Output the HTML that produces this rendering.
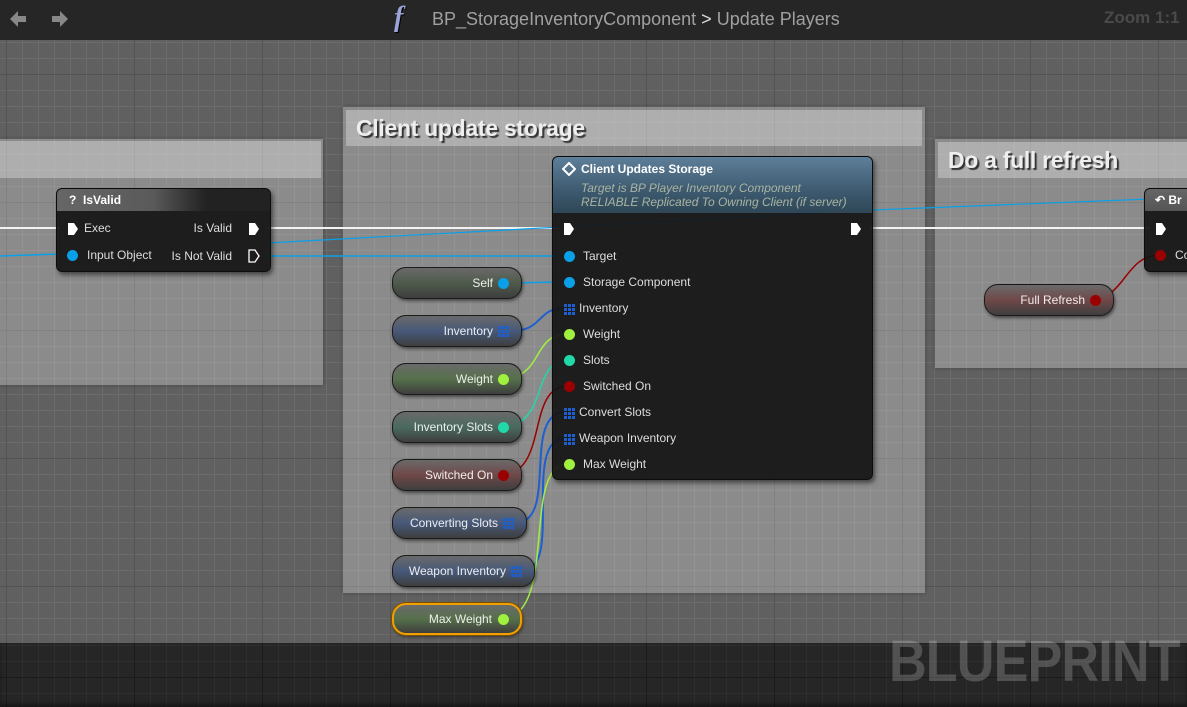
<!DOCTYPE html>
<html><head><meta charset="utf-8"><style>
*{margin:0;padding:0;box-sizing:border-box}
body{width:1187px;height:707px;overflow:hidden;position:relative;font-family:"Liberation Sans",sans-serif;background:#616161}
.grid{position:absolute;left:0;top:40px;width:1187px;height:603px;
background-color:#606060;
background-image:
linear-gradient(to right,#535353 1px,transparent 1px),
linear-gradient(to bottom,#535353 1px,transparent 1px),
linear-gradient(to right,#6c6c6c 1px,transparent 1px),
linear-gradient(to bottom,#6c6c6c 1px,transparent 1px);
background-size:128px 128px,128px 128px,16px 16px,16px 16px;
background-position:6px 34px,6px 34px,6px 2px,6px 2px}
.bottom{position:absolute;left:0;top:643px;width:1187px;height:64px;background-color:#262626;
background-image:linear-gradient(to right,#1b1b1b 1px,transparent 1px),linear-gradient(to bottom,#1b1b1b 1px,transparent 1px),linear-gradient(to right,#2e2e2e 1px,transparent 1px),linear-gradient(to bottom,#2e2e2e 1px,transparent 1px);
background-size:128px 128px,128px 128px,16px 16px,16px 16px;background-position:6px 34px,6px 34px,6px 2px,6px 2px;box-shadow:0 -3px 4px rgba(0,0,0,.4) inset}
.top{position:absolute;left:0;top:0;width:1187px;height:40px;background:#262626}
.cm{position:absolute;background:rgba(255,255,255,.27);box-shadow:0 0 4px rgba(0,0,0,.3)}
.cmh{position:absolute;background:rgba(255,255,255,.3);color:#eee;font-weight:bold;font-size:23px;padding:5px 10px;text-shadow:2px 2px 1px #333;letter-spacing:-.3px}
.node{position:absolute;background:rgba(20,20,20,.92);border:1px solid #0c0c0c;border-radius:6px;box-shadow:2px 3px 5px rgba(0,0,0,.5);color:#ddd;font-size:12px}
.nh{position:absolute;left:0;top:0;right:0;border-radius:5px 5px 0 0;color:#fff;font-weight:bold;font-size:12px}
.pin{position:absolute;font-size:12px;color:#ddd;white-space:nowrap}
.pill{position:absolute;height:32px;border-radius:14px;border:1px solid #1a1a1a;background:linear-gradient(#6a6a6a,#4a4a4a 60%,#3e3e3e);box-shadow:1px 2px 3px rgba(0,0,0,.5);color:#eee;font-size:12px;text-align:right;padding-right:28px;line-height:30px}
.dot{position:absolute;width:11px;height:11px;border-radius:50%}
.arr{position:absolute;width:11px;height:11px;display:block}
</style></head><body>
<svg width="0" height="0" style="position:absolute"><defs><g id="ar" fill="#1e5fd0"><rect x="0" y="0" width="3" height="3"/><rect x="4" y="0" width="3" height="3"/><rect x="8" y="0" width="3" height="3"/><rect x="0" y="4" width="3" height="3"/><rect x="4" y="4" width="3" height="3"/><rect x="8" y="4" width="3" height="3"/><rect x="0" y="8" width="3" height="3"/><rect x="4" y="8" width="3" height="3"/><rect x="8" y="8" width="3" height="3"/></g></defs></svg>
<div class="grid"></div>
<div class="bottom"></div>
<div class="top">
 <svg style="position:absolute;left:8px;top:9px" width="64" height="22"><path d="M2 10 L10 2 V7 H18 V13 H10 V18 Z" fill="#888"/><path d="M68 10 L60 2 V7 H52 V13 H60 V18 Z" fill="#888" transform="translate(-8,0)"/></svg>
 <div style="position:absolute;left:394px;top:2px;color:#9aa4d8;font-family:'Liberation Serif',serif;font-style:italic;font-weight:bold;font-size:28px;text-shadow:1px 1px 0 #000">f</div>
 <div style="position:absolute;left:432px;top:9px;color:#a0a0a0;font-size:18px">BP_StorageInventoryComponent <span style="color:#ddd">&gt;</span> Update Players</div>
 <div style="position:absolute;left:1104px;top:8px;color:#4a4a4a;font-size:17px;font-weight:bold">Zoom 1:1</div>
</div>
<div style="position:absolute;left:889px;top:628px;color:rgba(255,255,255,.2);font-size:58px;font-weight:bold;letter-spacing:-1px;transform:scaleX(.9);transform-origin:left">BLUEPRINT</div>

<div class="cm" style="left:-5px;top:139px;width:328px;height:246px"></div>
<div class="cmh" style="left:-5px;top:141px;width:326px;height:37px"></div>
<div class="cm" style="left:343px;top:107px;width:582px;height:486px"></div>
<div class="cmh" style="left:346px;top:110px;width:576px;height:36px">Client update storage</div>
<div class="cm" style="left:935px;top:139px;width:260px;height:229px"></div>
<div class="cmh" style="left:938px;top:142px;width:260px;height:36px">Do a full refresh</div>

<svg style="position:absolute;left:0;top:0" width="1187" height="707" fill="none">
 <path d="M0 228 H60 M268 228 H560 M870 228 H1150" stroke="#f2f2f2" stroke-width="2"/>
 <path d="M0 256 L60 254 M268 256 H568" stroke="#0aa0e8" stroke-width="1.6"/>
 <path d="M268 243 L873 210 L1150 199" stroke="#0aa0e8" stroke-width="1.2"/>
 <path d="M500 283 C530 283,540 282,568 282" stroke="#0aa0e8" stroke-width="1.5"/>
 <path d="M510 331 C545 331,535 308,566 308" stroke="#1e5fd0" stroke-width="2"/>
 <path d="M500 379 C545 379,530 334,568 334" stroke="#a0f040" stroke-width="1.5"/>
 <path d="M500 427 C550 427,530 360,568 360" stroke="#20d8a8" stroke-width="1.5"/>
 <path d="M500 475 C550 475,525 386,568 386" stroke="#9a0000" stroke-width="1.5"/>
 <path d="M515 523 C560 523,520 412,566 412" stroke="#1e5fd0" stroke-width="2"/>
 <path d="M522 571 C565 571,520 438,566 438" stroke="#1e5fd0" stroke-width="2"/>
 <path d="M500 619 C560 619,520 464,568 464" stroke="#a0f040" stroke-width="1.5"/>
 <path d="M1092 299 C1125 299,1125 255,1160 255" stroke="#9a0000" stroke-width="1.5"/>
</svg>

<div class="node" style="left:56px;top:188px;width:215px;height:84px">
 <div class="nh" style="height:22px;background:linear-gradient(to right,#666 0,#5a5a5a 45%,#222 70%,#222);padding:4px 0 0 12px">? &nbsp;IsValid</div>
 <svg style="position:absolute;left:10px;top:33px" width="12" height="14"><path d="M1 1 H7 L11 7 L7 13 H1 Z" fill="#fff"/></svg>
 <div class="pin" style="left:27px;top:32px">Exec</div>
 <div class="pin" style="right:38px;top:32px">Is Valid</div>
 <svg style="position:absolute;right:10px;top:33px" width="12" height="14"><path d="M1 1 H7 L11 7 L7 13 H1 Z" fill="#fff"/></svg>
 <div class="dot" style="left:10px;top:61px;background:#0aa0e8"></div>
 <div class="pin" style="left:30px;top:59px">Input Object</div>
 <div class="pin" style="right:38px;top:60px">Is Not Valid</div>
 <svg style="position:absolute;right:10px;top:60px" width="12" height="14"><path d="M1 1 H7 L11 7 L7 13 H1 Z" stroke="#fff" stroke-width="1.3" fill="none"/></svg>
</div>

<div class="node" style="left:552px;top:156px;width:321px;height:324px">
 <div class="nh" style="height:56px;background:linear-gradient(to bottom,#5f7f99,#3d5a70 60%,#2f4757);">
  <svg style="position:absolute;left:9px;top:5px" width="14" height="14"><path d="M7 1 L13 7 L7 13 L1 7 Z" stroke="#fff" stroke-width="2" fill="none"/></svg>
  <div style="position:absolute;left:28px;top:5px">Client Updates Storage</div>
  <div style="position:absolute;left:28px;top:24px;font-weight:normal;font-style:italic;color:#a9b4a0;line-height:14px">Target is BP Player Inventory Component<br>RELIABLE Replicated To Owning Client (if server)</div>
 </div>
 <svg style="position:absolute;left:10px;top:65px" width="12" height="14"><path d="M1 1 H7 L11 7 L7 13 H1 Z" fill="#fff"/></svg>
 <svg style="position:absolute;right:10px;top:65px" width="12" height="14"><path d="M1 1 H7 L11 7 L7 13 H1 Z" fill="#fff"/></svg>
 <div class="dot" style="left:11px;top:94px;background:#0aa0e8"></div><div class="pin" style="left:30px;top:92px">Target</div>
 <div class="dot" style="left:11px;top:120px;background:#0aa0e8"></div><div class="pin" style="left:30px;top:118px">Storage Component</div>
 <svg class="arr" style="left:11px;top:147px" width="11" height="11"><use href="#ar"/></svg><div class="pin" style="left:26px;top:144px">Inventory</div>
 <div class="dot" style="left:11px;top:172px;background:#a0f040"></div><div class="pin" style="left:30px;top:170px">Weight</div>
 <div class="dot" style="left:11px;top:198px;background:#20d8a8"></div><div class="pin" style="left:30px;top:196px">Slots</div>
 <div class="dot" style="left:11px;top:224px;background:#9a0000"></div><div class="pin" style="left:30px;top:222px">Switched On</div>
 <svg class="arr" style="left:11px;top:251px" width="11" height="11"><use href="#ar"/></svg><div class="pin" style="left:26px;top:248px">Convert Slots</div>
 <svg class="arr" style="left:11px;top:277px" width="11" height="11"><use href="#ar"/></svg><div class="pin" style="left:26px;top:274px">Weapon Inventory</div>
 <div class="dot" style="left:11px;top:302px;background:#a0f040"></div><div class="pin" style="left:30px;top:300px">Max Weight</div>
</div>

<div class="node" style="left:1144px;top:188px;width:60px;height:84px">
 <div class="nh" style="height:22px;background:linear-gradient(#666,#555);padding:4px 0 0 10px">&#8630; Br</div>
 <svg style="position:absolute;left:10px;top:33px" width="12" height="14"><path d="M1 1 H7 L11 7 L7 13 H1 Z" fill="#fff"/></svg>
 <div class="dot" style="left:10px;top:61px;background:#9a0000"></div><div class="pin" style="left:30px;top:59px">Co</div>
</div>

<div class="pill" style="left:392px;top:267px;width:130px;background:linear-gradient(#6a6a6a,#4e5a4a 50%,#3e3e3e)">Self<div class="dot" style="right:12px;top:10px;background:#0aa0e8"></div></div>
<div class="pill" style="left:392px;top:315px;width:130px;background:linear-gradient(#6a6a6a,#47597a 50%,#3e3e3e)">Inventory<svg class="arr" style="right:12px;top:10px" width="11" height="11"><use href="#ar"/></svg></div>
<div class="pill" style="left:392px;top:363px;width:130px;background:linear-gradient(#6a6a6a,#56704a 50%,#3e3e3e)">Weight<div class="dot" style="right:12px;top:10px;background:#a0f040"></div></div>
<div class="pill" style="left:392px;top:411px;width:130px;background:linear-gradient(#6a6a6a,#4a6a60 50%,#3e3e3e)">Inventory Slots<div class="dot" style="right:12px;top:10px;background:#20d8a8"></div></div>
<div class="pill" style="left:392px;top:459px;width:130px;background:linear-gradient(#6a6a6a,#704848 50%,#3e3e3e)">Switched On<div class="dot" style="right:12px;top:10px;background:#9a0000"></div></div>
<div class="pill" style="left:392px;top:507px;width:135px;background:linear-gradient(#6a6a6a,#47597a 50%,#3e3e3e)">Converting Slots<svg class="arr" style="right:12px;top:10px" width="11" height="11"><use href="#ar"/></svg></div>
<div class="pill" style="left:392px;top:555px;width:143px;background:linear-gradient(#6a6a6a,#47597a 50%,#3e3e3e)">Weapon Inventory<svg class="arr" style="right:12px;top:10px" width="11" height="11"><use href="#ar"/></svg></div>
<div class="pill" style="left:392px;top:603px;width:130px;border:2px solid #f0a000;box-shadow:0 0 0 1px #7a5000,1px 2px 3px rgba(0,0,0,.5);background:linear-gradient(#6a6a6a,#56704a 50%,#3e3e3e);line-height:28px">Max Weight<div class="dot" style="right:11px;top:9px;background:#a0f040"></div></div>
<div class="pill" style="left:984px;top:284px;width:130px;background:linear-gradient(#6a6a6a,#704848 50%,#3e3e3e)">Full Refresh<div class="dot" style="right:12px;top:10px;background:#9a0000"></div></div>
</body></html>
